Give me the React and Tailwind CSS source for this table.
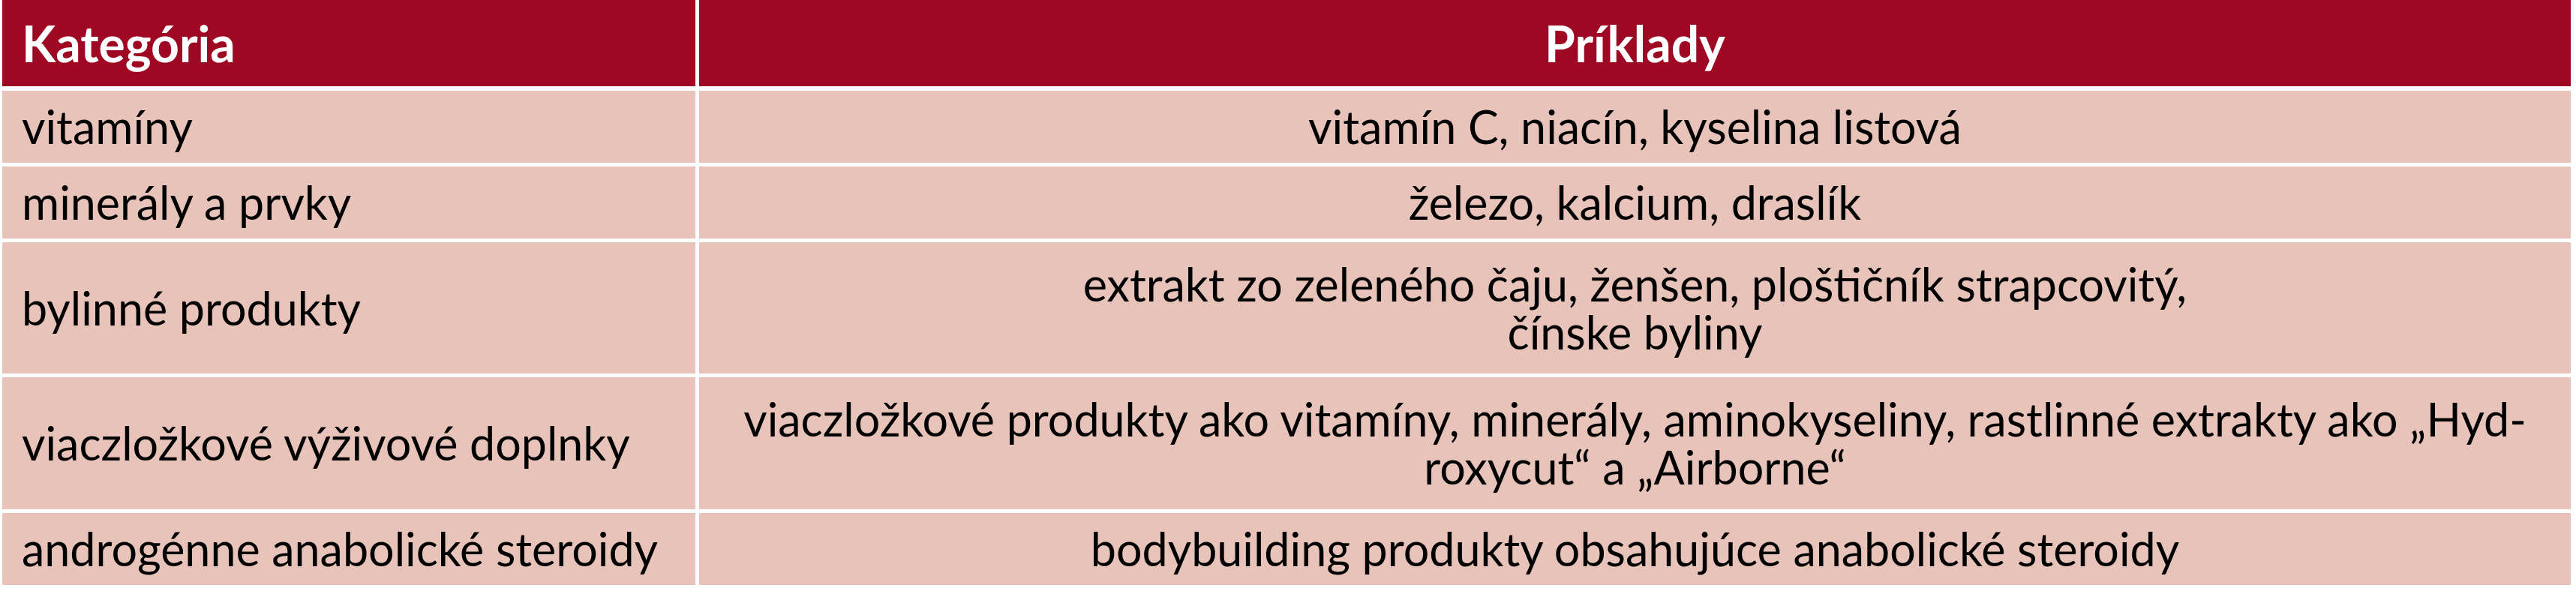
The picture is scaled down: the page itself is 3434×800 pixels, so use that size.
import React from "react";

const rows = [
  { category: "vitamíny", examples: ["vitamín C, niacín, kyselina listová"], h: "h-[96px]" },
  { category: "minerály a prvky", examples: ["železo, kalcium, draslík"], h: "h-[96px]" },
  {
    category: "bylinné produkty",
    examples: ["extrakt zo zeleného čaju, ženšen, ploštičník strapcovitý,", "čínske byliny"],
    h: "h-[175px]",
  },
  {
    category: "viaczložkové výživové doplnky",
    examples: [
      "viaczložkové produkty ako vitamíny, minerály, aminokyseliny, rastlinné extrakty ako „Hyd-",
      "roxycut“ a „Airborne“",
    ],
    h: "h-[176px]",
  },
  {
    category: "androgénne anabolické steroidy",
    examples: ["bodybuilding produkty obsahujúce anabolické steroidy"],
    h: "h-[96px]",
  },
];

const App = () => {
  return (
    <div className="w-[3434px] h-[800px] bg-white font-['Lato',sans-serif] text-black">
      <div className="ml-[3px] w-[3424px] flex flex-col gap-[5px]">
        {/* header */}
        <div className="flex gap-[5px] h-[115px] mb-[1px]">
          <div className="w-[924px] bg-[#9e0823] flex items-center pl-[26px] text-white font-bold text-[66px]">
            Kategória
          </div>
          <div className="flex-1 bg-[#9e0823] flex items-center justify-center text-white font-bold text-[66px]">
            Príklady
          </div>
        </div>
        {rows.map((row, i) => (
          <div key={i} className={`flex gap-[5px] ${row.h}`}>
            <div className="w-[924px] bg-[#e8c3b9] flex items-center pl-[26px] text-[61px] leading-[64px]">
              {row.category}
            </div>
            <div className="flex-1 bg-[#e8c3b9] flex items-center justify-center">
              <p className="text-center text-[61px] leading-[64px]">
                {row.examples.map((line, j) => (
                  <React.Fragment key={j}>
                    {j > 0 && <br />}
                    {line}
                  </React.Fragment>
                ))}
              </p>
            </div>
          </div>
        ))}
      </div>
    </div>
  );
};

export default App;
